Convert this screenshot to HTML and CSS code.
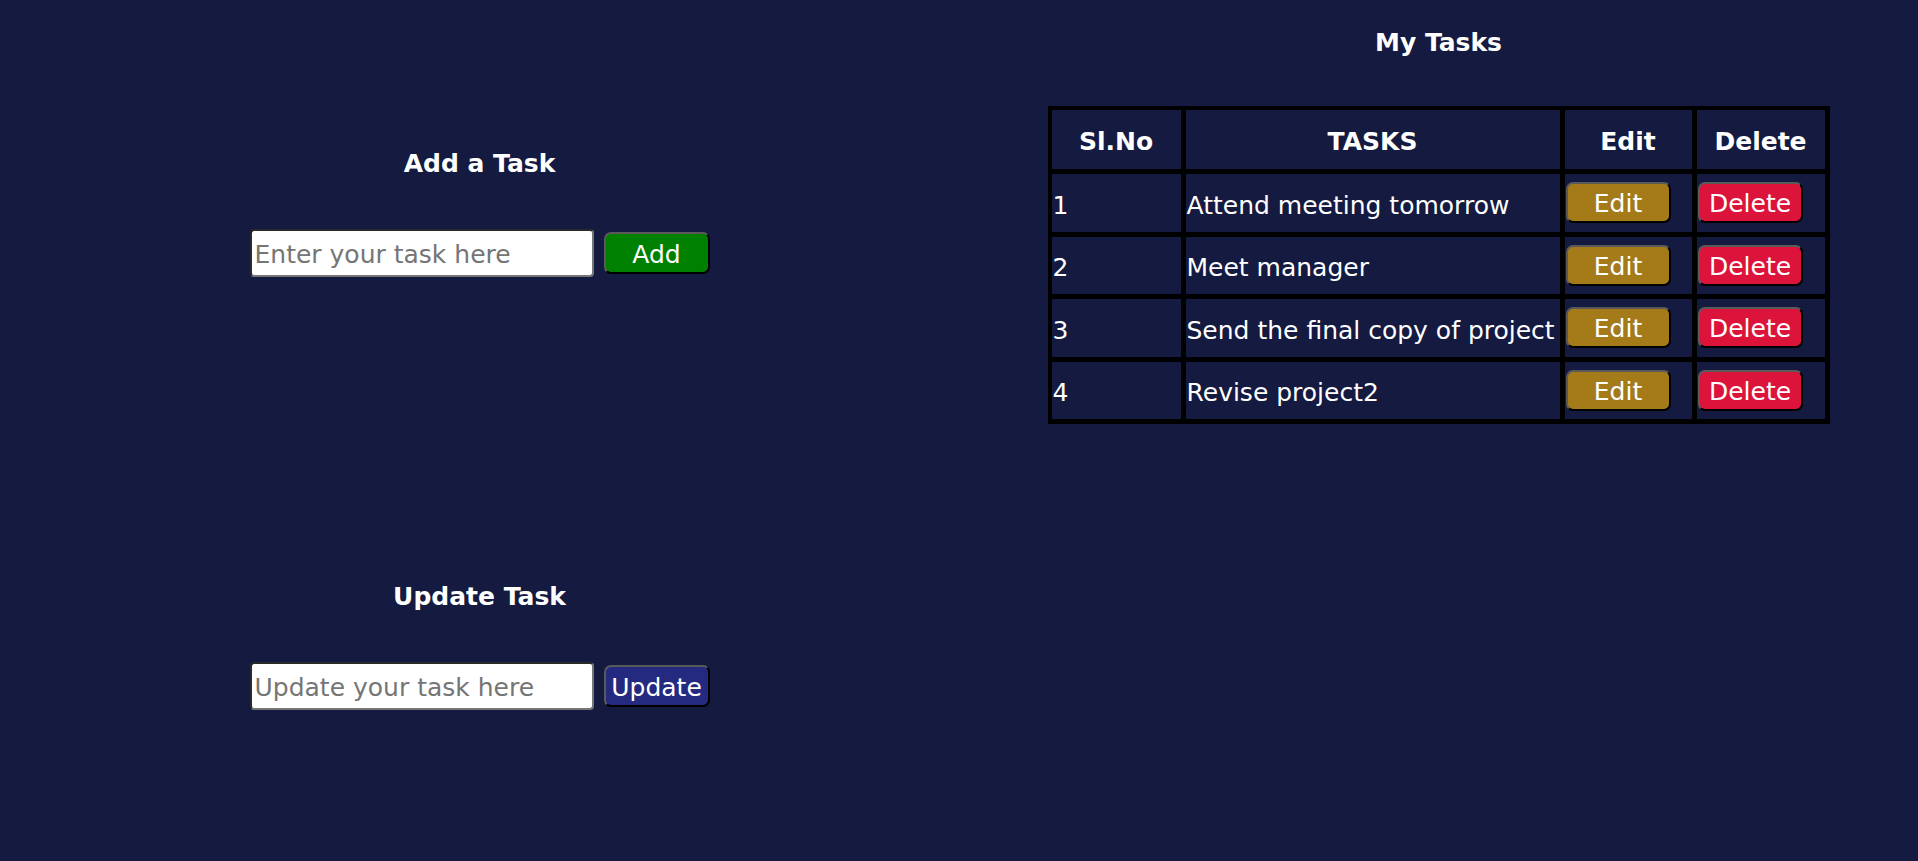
FILE: index.html
```html
<!DOCTYPE html>
<html>
<head>
<meta charset="utf-8">
<title>To-Do</title>
<link rel="stylesheet" href="styles.css">
</head>
<body>
<div class="page">
  <section class="left">
    <div class="block add-block">
      <h2 class="title">Add a Task</h2>
      <div class="field">
        <input class="task-input" type="text" placeholder="Enter your task here">
        <button class="btn btn-add">Add</button>
      </div>
    </div>
    <div class="block update-block">
      <h2 class="title">Update Task</h2>
      <div class="field">
        <input class="task-input" type="text" placeholder="Update your task here">
        <button class="btn btn-update">Update</button>
      </div>
    </div>
  </section>
  <section class="right">
    <h2 class="title tasks-title">My Tasks</h2>
    <table class="tasks">
      <colgroup>
        <col class="c-no"><col class="c-task"><col class="c-edit"><col class="c-del">
      </colgroup>
      <thead>
        <tr><th>Sl.No</th><th>TASKS</th><th>Edit</th><th>Delete</th></tr>
      </thead>
      <tbody>
        <tr><td class="txt">1</td><td class="txt">Attend meeting tomorrow</td><td><button class="btn btn-edit">Edit</button></td><td><button class="btn btn-del">Delete</button></td></tr>
        <tr><td class="txt">2</td><td class="txt">Meet manager</td><td><button class="btn btn-edit">Edit</button></td><td><button class="btn btn-del">Delete</button></td></tr>
        <tr><td class="txt">3</td><td class="txt">Send the final copy of project</td><td><button class="btn btn-edit">Edit</button></td><td><button class="btn btn-del">Delete</button></td></tr>
        <tr><td class="txt">4</td><td class="txt">Revise project2</td><td><button class="btn btn-edit">Edit</button></td><td><button class="btn btn-del">Delete</button></td></tr>
      </tbody>
    </table>
  </section>
</div>
</body>
</html>
```

FILE: styles.css
```css
html, body {
  margin: 0;
  padding: 0;
  background: #141a40;
}
body {
  font-family: "DejaVu Sans", Verdana, sans-serif;
  color: #fff;
  min-height: 861px;
}
.page {
  display: grid;
  grid-template-columns: 1fr 1fr;
}
.left {
  display: flex;
  flex-direction: column;
  align-items: center;
  padding-top: 150px;
}
.right {
  display: flex;
  flex-direction: column;
  align-items: center;
  padding-top: 29px;
}
.title {
  margin: 0;
  font-size: 25px;
  line-height: 28px;
  font-weight: bold;
  text-align: center;
}
.block {
  display: flex;
  flex-direction: column;
  align-items: center;
}
.block .title {
  margin-bottom: 51px;
}
.update-block {
  margin-top: 306px;
}
.field {
  display: flex;
  align-items: center;
  gap: 10px;
}
.task-input {
  box-sizing: border-box;
  width: 344px;
  height: 48px;
  margin: 0;
  padding: 2px 3px 0;
  border: 2px solid #767676;
  border-top-color: #2a2a2a;
  border-left-color: #2a2a2a;
  border-radius: 4px;
  background: #fff;
  font-family: "DejaVu Sans", Verdana, sans-serif;
  font-size: 25px;
  color: #000;
}
.task-input::placeholder {
  color: #757575;
}
.btn {
  box-sizing: border-box;
  width: 106px;
  height: 42px;
  margin: 0;
  padding: 2px 0 0;
  border: 2px solid #000;
  border-top-color: #5a5a5a;
  border-left-color: #5a5a5a;
  border-radius: 7px;
  font-family: "DejaVu Sans", Verdana, sans-serif;
  font-size: 25px;
  line-height: 1;
  color: #fff;
}
.btn-add { background: #008000; }
.btn-update { background: #232a80; }
.btn-edit { background: #a57b1a; width: 105px; height: 41px; }
.btn-del { background: #dc143c; width: 105px; height: 41px; }

.tasks-title {
  margin-bottom: 49px;
}
.tasks {
  box-sizing: border-box;
  width: 782px;
  table-layout: fixed;
  border-collapse: separate;
  border-spacing: 0;
  border: 2px solid #000;
}
.c-no { width: 134px; }
.c-task { width: 379px; }
.c-edit { width: 132px; }
.c-del { width: 133px; }
.tasks th, .tasks td {
  box-sizing: border-box;
  border: 2px solid #000;
  border-right-width: 3px;
  border-bottom-width: 3px;
  padding: 1px;
  font-size: 25px;
  vertical-align: middle;
  white-space: nowrap;
}
.tasks th {
  height: 64px;
  padding-top: 5px;
  text-align: center;
  font-weight: bold;
}
.tasks td {
  height: 62.5px;
  text-align: left;
}
.tasks td.txt {
  padding-top: 6px;
}
.tasks td .btn {
  display: block;
}
```
